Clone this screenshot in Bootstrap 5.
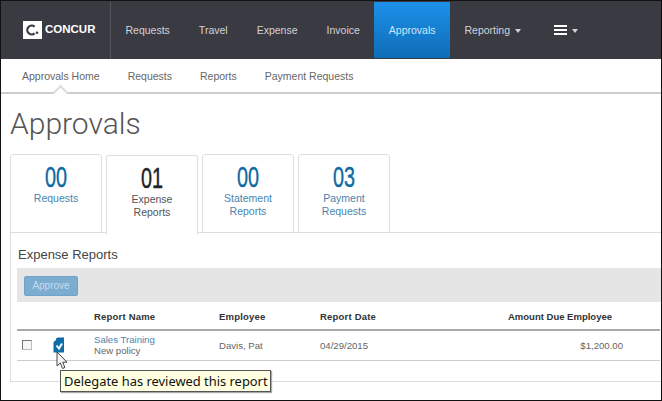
<!DOCTYPE html>
<html lang="en">
<head>
  <meta charset="UTF-8" />
  <meta name="viewport" content="width=device-width, initial-scale=1" />
  <title>Concur - Approvals</title>
  <link href="https://cdn.jsdelivr.net/npm/bootstrap@5.3.0/dist/css/bootstrap.min.css" rel="stylesheet">
  <style>
    html, body { margin: 0; background: #fff; }
    body { font-family: "Liberation Sans", Arial, sans-serif; font-size: 10.5px; color: #555; }
    a { text-decoration: none; }

    .shot-frame { position: relative; width: 662px; height: 401px; overflow: hidden; border: 1px solid #111; }

    /* top bar */
    .top-bar { height: 58px; background: #3a3a43; padding: 0; flex-wrap: nowrap; justify-content: flex-start; }
    .brand-box { width: 110px; height: 58px; padding-left: 22px; border-right: 1px solid #55555e; margin: 0; gap: 3px; color: #fff; font-weight: 700; font-size: 11.5px; }
    .brand-box:hover { color: #fff; }
    .top-links { flex-direction: row; height: 58px; }
    .top-links .nav-link { color: #d3d3d8; font-size: 10.5px; padding: 0 14.5px; height: 56px; margin-top: 1px; line-height: 56px; }
    .top-links .nav-link.active { color: #cfe6fa; background: linear-gradient(#1c90ea, #0f6db6); }
    .top-links .dropdown-toggle::after { border-top-width: 4px; border-left-width: 3.5px; border-right-width: 3.5px; margin-left: 5px; vertical-align: 1px; }
    .menu-link { padding-left: 18px !important; }
    .menu-link svg { vertical-align: -1px; }

    /* second bar */
    .sub-bar { position: relative; height: 35px; border-bottom: 2px solid #ccc; padding-left: 21px; gap: 28px; background: #fff; }
    .sub-bar .nav-link { color: #666; font-size: 10.5px; padding: 0; line-height: 34px; }
    .sub-home { position: relative; }
    .sub-home::after { content: ""; position: absolute; left: 33px; bottom: -5px; width: 11px; height: 11px; background: #fff; border-left: 2px solid #ddd; border-top: 2px solid #ddd; transform: rotate(45deg); }

    .page-title { height: 60px; line-height: 60px; margin: 0; padding-left: 9px; font-family: Roboto, sans-serif; font-weight: 300; font-size: 30px; color: #555; }

    /* count tabs */
    .count-tabs { margin-left: 9px; border-bottom: 1px solid #ddd; gap: 4px; flex-wrap: nowrap; height: 79px; }
    .count-tabs .nav-link { width: 92px; height: 79px; padding: 8px 4px 0; text-align: center; border: 1px solid #ddd; border-radius: 3px 3px 0 0; color: #4a84ad; font-size: 10.5px; line-height: 13px; margin-bottom: 0; background: #fff; }
    .count-tabs .nav-link.active { height: 80px; margin-top: 1px; border-color: #ddd #ddd #fff; color: #555; }
    .tab-num { display: block; height: 27px; margin-bottom: 2px; font-size: 30px; line-height: 27px; color: #0f6a9f; transform: scaleX(.66); -webkit-text-stroke: .4px currentColor; }
    .active .tab-num { color: #222; }

    .tab-body { margin-left: 9px; height: 149px; border: solid #ddd; border-width: 0 0 1px 1px; padding-left: 6px; background: #fff; }
    .section-head { height: 35px; margin: 0; padding-left: 1px; line-height: 43px; font-size: 13px; font-weight: 400; color: #444; }
    .action-bar { height: 34px; background: #e5e5e5; padding: 8px 7px; }
    .approve-btn { width: 54px; height: 20px; padding: 0; font-size: 10px; line-height: 18px; border-radius: 2px; --bs-btn-disabled-color: #c5dcec; --bs-btn-disabled-bg: #7cadd0; --bs-btn-disabled-border-color: #6fa3c8; --bs-btn-disabled-opacity: 1; }

    /* report table */
    .report-table { width: 643px; table-layout: fixed; margin: 0; font-size: 9.6px; color: #666; --bs-table-color: #666; }
    .report-table th { height: 28px; padding: 3px 5px 0; font-size: 9.5px; font-weight: 700; color: #333; letter-spacing: .2px; border-bottom: 2px solid #a9a9a9; vertical-align: middle; white-space: nowrap; }
    .report-table td { height: 30px; padding: 0 5px; border-bottom: 1px solid #ccc; vertical-align: middle; line-height: 11px; }
    .report-table .amount-head { text-align: right; padding-right: 16px; letter-spacing: 0; }
    .report-table .amount-cell { text-align: right; }
    .report-link { color: #4a84ad; display: block; }
    .row-check { display: block; width: 10px; height: 10px; border: 1px solid #777; border-color: #777 #bbb #bbb #777; background: #f6f6f6; }
    .row-icon { display: block; margin: -1px 0 0 -1px; }

    /* overlays */
    .hint-box { position: absolute; left: 59px; top: 369px; width: 211px; height: 22px; background: #ffffe1; border: 1px solid #555; box-shadow: 1px 1px 1px #aaa; color: #111; font-family: "Noto Sans", "DejaVu Sans", sans-serif; font-size: 12.9px; line-height: 20px; padding-left: 3px; white-space: nowrap; }
    .mouse-arrow { position: absolute; left: 55px; top: 350px; }
  </style>
</head>
<body>
<div class="shot-frame">
  <nav class="navbar top-bar">
    <a class="navbar-brand brand-box d-flex align-items-center" href="#">
      <svg width="19" height="18" viewBox="0 0 19 18"><rect width="19" height="18" fill="#fff"/><path d="M11.6 5.7a4.4 4.4 0 1 0 0 6.6" fill="none" stroke="#3a3a43" stroke-width="2.2"/><circle cx="14" cy="11.8" r="1.3" fill="#3a3a43"/></svg>
      <span>CONCUR</span>
    </a>
    <ul class="navbar-nav top-links">
      <li class="nav-item"><a class="nav-link" href="#">Requests</a></li>
      <li class="nav-item"><a class="nav-link" href="#">Travel</a></li>
      <li class="nav-item"><a class="nav-link" href="#">Expense</a></li>
      <li class="nav-item"><a class="nav-link" href="#">Invoice</a></li>
      <li class="nav-item"><a class="nav-link active" href="#">Approvals</a></li>
      <li class="nav-item"><a class="nav-link dropdown-toggle" href="#">Reporting</a></li>
      <li class="nav-item"><a class="nav-link dropdown-toggle menu-link" href="#"><svg width="13" height="10" viewBox="0 0 13 10"><path d="M0 1h13M0 5h13M0 9h13" stroke="#fff" stroke-width="2"/></svg></a></li>
    </ul>
  </nav>

  <ul class="nav sub-bar">
    <li class="nav-item sub-home"><a class="nav-link" href="#">Approvals Home</a></li>
    <li class="nav-item"><a class="nav-link" href="#">Requests</a></li>
    <li class="nav-item"><a class="nav-link" href="#">Reports</a></li>
    <li class="nav-item"><a class="nav-link" href="#">Payment Requests</a></li>
  </ul>

  <h1 class="page-title">Approvals</h1>

  <ul class="nav nav-tabs count-tabs">
    <li class="nav-item"><a class="nav-link" href="#"><span class="tab-num">00</span>Requests</a></li>
    <li class="nav-item"><a class="nav-link active" href="#"><span class="tab-num">01</span>Expense<br>Reports</a></li>
    <li class="nav-item"><a class="nav-link" href="#"><span class="tab-num">00</span>Statement<br>Reports</a></li>
    <li class="nav-item"><a class="nav-link" href="#"><span class="tab-num">03</span>Payment<br>Requests</a></li>
  </ul>

  <div class="tab-body">
    <h2 class="section-head">Expense Reports</h2>
    <div class="action-bar">
      <button type="button" class="btn btn-primary approve-btn" disabled>Approve</button>
    </div>
    <table class="table report-table">
      <colgroup>
        <col style="width:32px"><col style="width:40px"><col style="width:125px"><col style="width:101px"><col style="width:160px"><col style="width:153px"><col style="width:32px">
      </colgroup>
      <thead>
        <tr><th></th><th></th><th>Report Name</th><th>Employee</th><th>Report Date</th><th class="amount-head">Amount Due Employee</th><th></th></tr>
      </thead>
      <tbody>
        <tr>
          <td><span class="row-check"></span></td>
          <td>
            <svg class="row-icon" width="12" height="16" viewBox="0 0 12 16"><path d="M.5 15.5V5L3 3V1.5L5 .5h6V15.5z" fill="#0f6ca8"/><path d="M3.5 8.5 6 11.5l3-5" fill="none" stroke="#fff" stroke-width="1.9"/></svg>
          </td>
          <td><a class="report-link" href="#">Sales Training</a>New policy</td>
          <td>Davis, Pat</td>
          <td>04/29/2015</td>
          <td class="amount-cell">$1,200.00</td>
          <td></td>
        </tr>
      </tbody>
    </table>
  </div>

  <div class="hint-box">Delegate has reviewed this report</div>
  <svg class="mouse-arrow" width="12" height="20" viewBox="0 0 12 20"><path d="M1 1v14l3.3-3 2.2 5.5 2.4-1-2.2-5.3H11z" fill="#f4f4f4" stroke="#444" stroke-width="1"/></svg>
</div>
<script src="https://cdn.jsdelivr.net/npm/bootstrap@5.3.0/dist/js/bootstrap.bundle.min.js"></script>
</body>
</html>
